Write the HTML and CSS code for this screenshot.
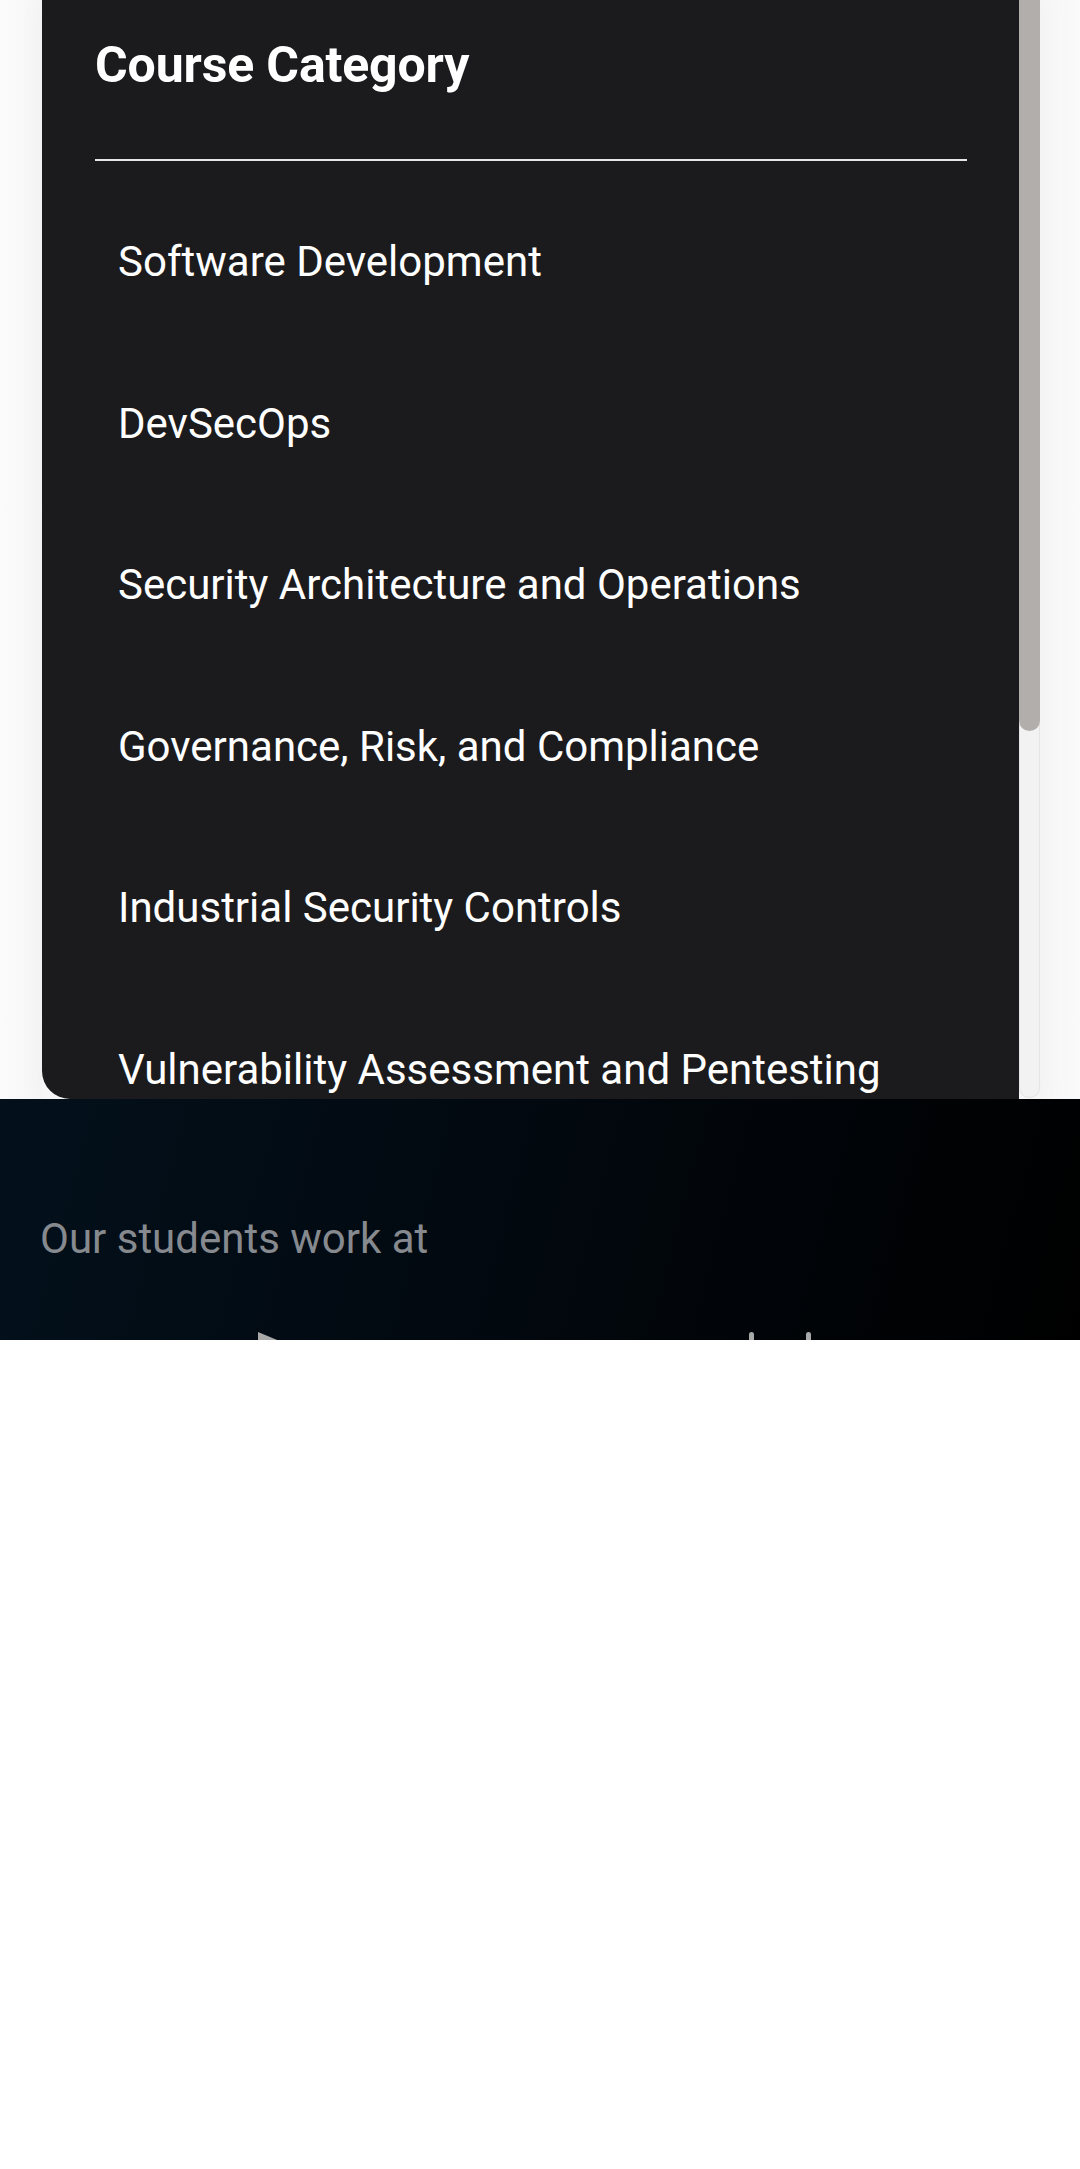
FILE: index.html
```html
<!DOCTYPE html>
<html lang="en">
<head>
<meta charset="utf-8">
<title>Course Category</title>
<link rel="stylesheet" href="styles.css">
</head>
<body>
<div class="page">
  <section class="catalog">
    <div class="scroller">
      <div class="panel">
        <h2 class="panel-title">Course Category</h2>
        <hr class="divider">
        <ul class="cat-list">
          <li class="cat-item">Software Development</li>
          <li class="cat-item">DevSecOps</li>
          <li class="cat-item">Security Architecture and Operations</li>
          <li class="cat-item">Governance, Risk, and Compliance</li>
          <li class="cat-item">Industrial Security Controls</li>
          <li class="cat-item">Vulnerability Assessment and Pentesting</li>
        </ul>
      </div>
      <div class="scrollbar"><div class="thumb"></div></div>
    </div>
  </section>
  <section class="clients">
    <p class="clients-title">Our students work at</p>
    <div class="logos">
      <svg class="logo logo-play" width="60" height="50" viewBox="0 0 60 50">
        <polygon points="0,0 48,20 0,40" fill="#a9a9a9"/>
      </svg>
      <svg class="logo logo-bars" width="70" height="50" viewBox="0 0 70 50">
        <rect x="0" y="0" width="5" height="50" rx="2.5" fill="#a9a9a9"/>
        <rect x="57" y="0" width="5" height="50" rx="2.5" fill="#a9a9a9"/>
      </svg>
    </div>
  </section>
  <div class="rest"></div>
</div>
</body>
</html>
```

FILE: styles.css
```css
* { box-sizing: border-box; }
html, body { margin: 0; padding: 0; background: #ffffff; }
body { font-family: Roboto, "Noto Sans", "Liberation Sans", sans-serif; width: 1080px; }

.page { display: flex; flex-direction: column; }

.catalog {
  display: flex;
  padding: 0 40px 0 42px;
  background: linear-gradient(to right, #fbfbfb 0%, #f6f6f6 4%, #f8f8f8 50%, #f6f6f6 96%, #fafafa 100%);
}

.scroller {
  flex: 1;
  display: flex;
  height: 1099px;
  overflow: hidden;
  box-shadow: 0 0 30px rgba(0, 0, 0, 0.03);
}

.panel {
  flex: 1;
  background: #1b1b1d;
  border-bottom-left-radius: 28px;
  padding: 35px 52px 0 53px;
  overflow: hidden;
}

.panel-title {
  margin: 0;
  font-size: 50px;
  line-height: 60px;
  font-weight: 700;
  color: #ffffff;
  letter-spacing: -0.15px;
}

.divider {
  margin: 64px 0 0;
  border: none;
  height: 2px;
  background: #e6e6e6;
}

.cat-list {
  list-style: none;
  margin: 20px 0 0;
  padding: 0 0 0 23px;
}

.cat-item {
  padding: 56px 0;
  font-size: 42px;
  line-height: 49.5px;
  color: #ffffff;
  white-space: nowrap;
}

.scrollbar {
  width: 21px;
  background: #f2f2f2;
  border-left: 1px solid #e4e4e4;
  border-right: 1px solid #e4e4e4;
  border-bottom: 1px solid #e4e4e4;
  border-radius: 0 0 10px 10px;
  margin-bottom: 1px;
  display: flex;
  flex-direction: column;
}

.thumb {
  height: 731px;
  margin: 0 -1px;
  background: #b2aeac;
  border-radius: 0 0 11px 11px;
}

.clients {
  height: 241px;
  overflow: hidden;
  padding: 115px 40px 0 40px;
  background: linear-gradient(105deg, #03101b 0%, #020910 45%, #000000 100%);
}

.clients-title {
  margin: 0;
  font-size: 42px;
  line-height: 49.5px;
  color: #868a8f;
}

.logos {
  display: flex;
  align-items: flex-start;
  margin-top: 68px;
  padding-left: 218px;
}

.logo { display: block; flex: none; }
.logo-bars { margin-left: 431px; }

.rest { height: 829px; background: #ffffff; }
```
